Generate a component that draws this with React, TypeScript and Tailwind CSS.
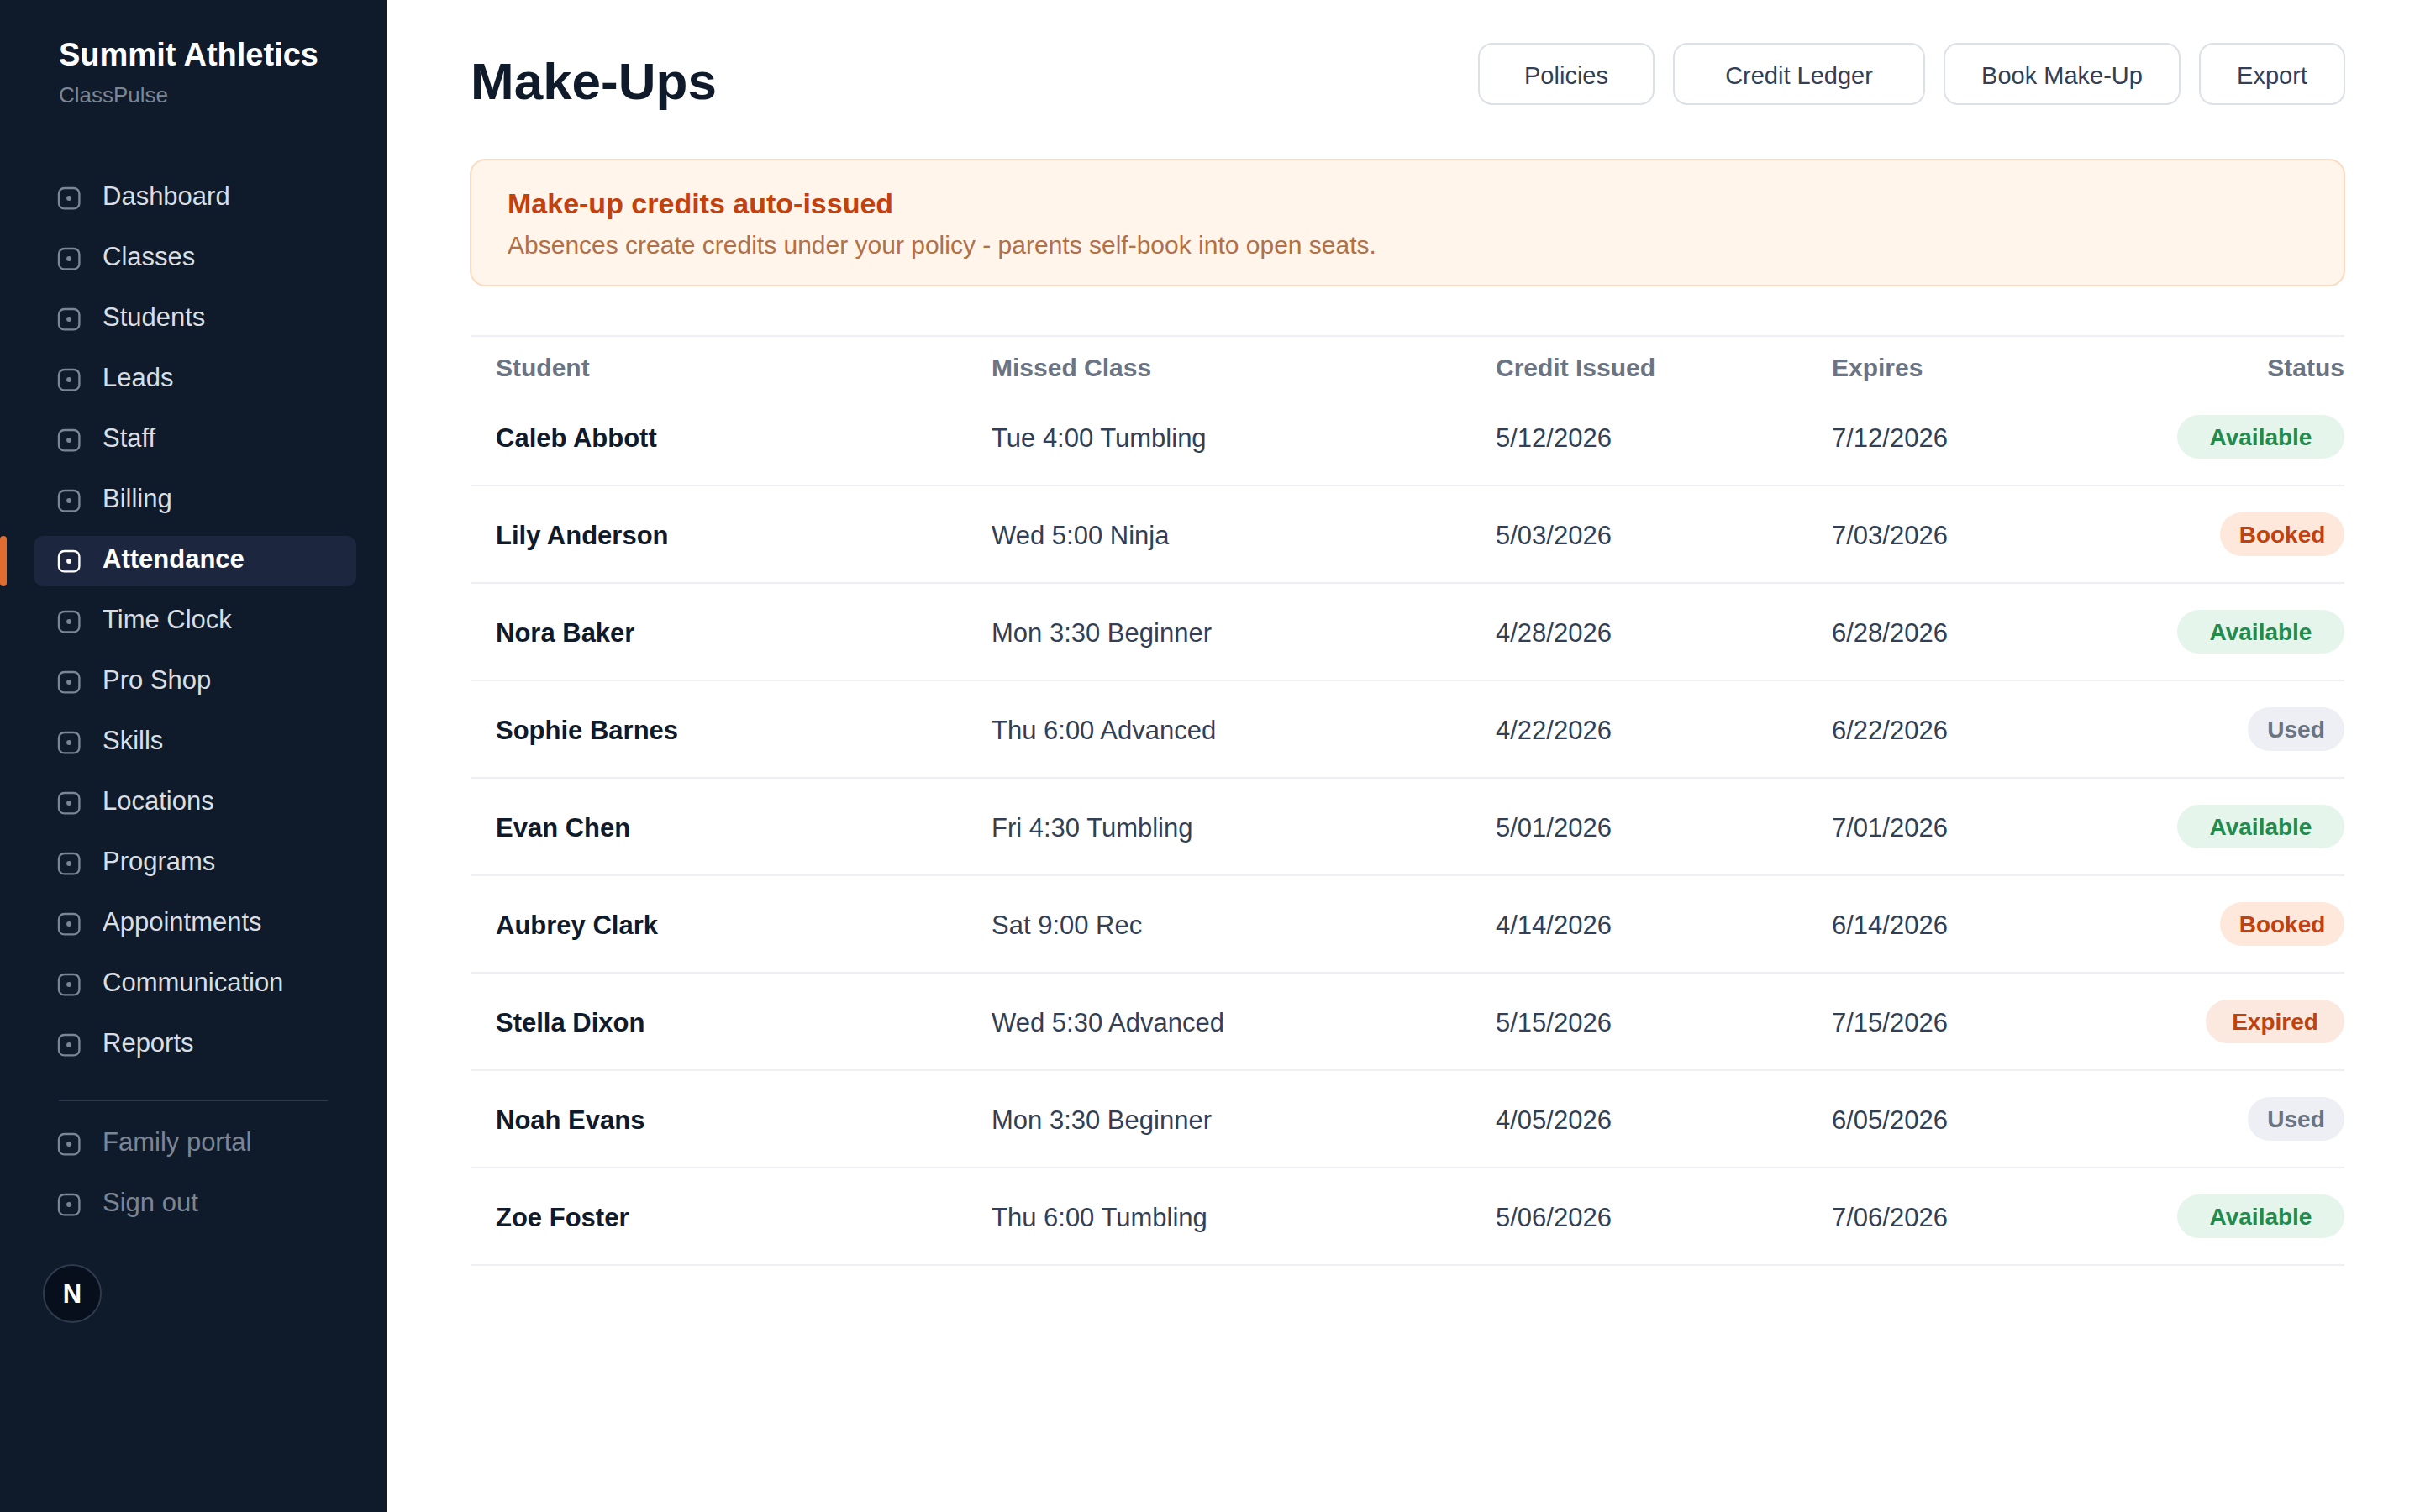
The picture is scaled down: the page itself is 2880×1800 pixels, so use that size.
import { clsx } from "clsx";

interface NavItem {
  label: string;
  active?: boolean;
}

type Status = "Available" | "Booked" | "Used" | "Expired";

interface MakeUp {
  student: string;
  missed: string;
  issued: string;
  expires: string;
  status: Status;
}

const NAV_ITEMS: NavItem[] = [
  { label: "Dashboard" },
  { label: "Classes" },
  { label: "Students" },
  { label: "Leads" },
  { label: "Staff" },
  { label: "Billing" },
  { label: "Attendance", active: true },
  { label: "Time Clock" },
  { label: "Pro Shop" },
  { label: "Skills" },
  { label: "Locations" },
  { label: "Programs" },
  { label: "Appointments" },
  { label: "Communication" },
  { label: "Reports" },
];

const FOOTER_ITEMS: NavItem[] = [{ label: "Family portal" }, { label: "Sign out" }];

const ACTIONS = [
  { label: "Policies", width: "w-[210px]" },
  { label: "Credit Ledger", width: "w-[300px]" },
  { label: "Book Make-Up", width: "w-[282px]" },
  { label: "Export", width: "w-[174px]" },
];

const MAKE_UPS: MakeUp[] = [
  { student: "Caleb Abbott", missed: "Tue 4:00 Tumbling", issued: "5/12/2026", expires: "7/12/2026", status: "Available" },
  { student: "Lily Anderson", missed: "Wed 5:00 Ninja", issued: "5/03/2026", expires: "7/03/2026", status: "Booked" },
  { student: "Nora Baker", missed: "Mon 3:30 Beginner", issued: "4/28/2026", expires: "6/28/2026", status: "Available" },
  { student: "Sophie Barnes", missed: "Thu 6:00 Advanced", issued: "4/22/2026", expires: "6/22/2026", status: "Used" },
  { student: "Evan Chen", missed: "Fri 4:30 Tumbling", issued: "5/01/2026", expires: "7/01/2026", status: "Available" },
  { student: "Aubrey Clark", missed: "Sat 9:00 Rec", issued: "4/14/2026", expires: "6/14/2026", status: "Booked" },
  { student: "Stella Dixon", missed: "Wed 5:30 Advanced", issued: "5/15/2026", expires: "7/15/2026", status: "Expired" },
  { student: "Noah Evans", missed: "Mon 3:30 Beginner", issued: "4/05/2026", expires: "6/05/2026", status: "Used" },
  { student: "Zoe Foster", missed: "Thu 6:00 Tumbling", issued: "5/06/2026", expires: "7/06/2026", status: "Available" },
];

const STATUS_STYLES: Record<Status, string> = {
  Available: "w-[199px] bg-[#e6f5ec] text-[#208b4c]",
  Booked: "w-[148px] bg-[#fde8db] text-[#c2410c]",
  Used: "w-[115px] bg-[#eeeff4] text-[#6b7483]",
  Expired: "w-[165px] bg-[#fbe9df] text-[#c2410c]",
};

const GRID = "grid grid-cols-[590px_600px_400px_1fr] pl-[30px]";

function NavIcon() {
  return (
    <svg viewBox="0 0 28 28" className="size-7 shrink-0" fill="none">
      <rect x="2" y="2" width="24.4" height="24.4" rx="6.5" stroke="currentColor" strokeWidth="2.4" />
      <circle cx="14.1" cy="14.1" r="3" fill="currentColor" />
    </svg>
  );
}

function NavRow({ item, muted }: { item: NavItem; muted?: boolean }) {
  return (
    <div className="relative">
      {item.active && <div className="absolute inset-y-0 left-0 w-2 rounded bg-[#e06c2f]" />}
      <a
        className={clsx(
          "ml-10 mr-9 flex h-[60px] items-center gap-[26px] rounded-xl pl-7 text-[31px]",
          item.active ? "bg-[#1c273f] font-bold text-white" : "text-[#7b8594]"
        )}
      >
        <NavIcon />
        <span
          className={clsx(
            "mt-2.5 self-start whitespace-nowrap leading-[35px]",
            !item.active && !muted && "text-[#d9dee5]"
          )}
        >
          {item.label}
        </span>
      </a>
    </div>
  );
}

function Sidebar() {
  return (
    <aside className="flex w-[460px] shrink-0 flex-col bg-[#0f1a2b] pt-11">
      <div className="px-[70px]">
        <div className="whitespace-nowrap text-[38px] font-bold leading-[42px] text-white">Summit Athletics</div>
        <div className="mt-3 text-[26px] leading-[30px] text-[#7b8594]">ClassPulse</div>
      </div>

      <nav className="mt-[78px] flex flex-col gap-3">
        {NAV_ITEMS.map(item => (
          <NavRow key={item.label} item={item} />
        ))}
      </nav>

      <div className="ml-[70px] mt-[35px] h-0.5 w-80 bg-[#2c3749]" />

      <nav className="mt-[21px] flex flex-col gap-3">
        {FOOTER_ITEMS.map(item => (
          <NavRow key={item.label} item={item} muted />
        ))}
      </nav>

      <div className="ml-[51px] mt-[41px] flex size-[70px] items-center justify-center rounded-full border-2 border-[#2f3a4d] bg-[#080f1c] pt-0.5 text-[31px] font-bold leading-9 text-white">
        N
      </div>
    </aside>
  );
}

export default function App() {
  return (
    <div className="flex h-[1800px] w-[2880px] overflow-hidden bg-white font-['Liberation_Sans',Arial,sans-serif]">
      <Sidebar />

      <main className="flex flex-1 flex-col pl-[99px] pr-[89px] pt-[51px]">
        {/* Title and actions */}
        <header className="flex h-[74px] items-start justify-between">
          <h1 className="mt-[11px] pl-px text-[62px] font-bold leading-[69px] text-[#0f1a2b]">Make-Ups</h1>
          <div className="flex gap-[22px]">
            {ACTIONS.map(action => (
              <button
                key={action.label}
                className={clsx(
                  "h-[74px] whitespace-nowrap rounded-[17px] border-2 border-[#dce0e7] pt-1 text-[29px] leading-8 text-[#333f54]",
                  action.width
                )}
              >
                {action.label}
              </button>
            ))}
          </div>
        </header>

        {/* Policy notice */}
        <section className="mt-16 h-[152px] rounded-[19px] border-2 border-[#fbdcc0] bg-[#fff5eb] px-[43px] pt-8">
          <h2 className="text-[34px] font-bold leading-[38px] text-[#c2410c]">Make-up credits auto-issued</h2>
          <p className="mt-[14px] text-[30px] leading-[33px] text-[#b07048]">
            Absences create credits under your policy - parents self-book into open seats.
          </p>
        </section>

        {/* Credits table */}
        <section className="mx-px mt-[58px] border-t-2 border-[#eeeff4]">
          <div className={clsx(GRID, "h-[62px] pt-5 text-[30px] font-bold leading-[33px] text-[#6b7483]")}>
            <div>Student</div>
            <div>Missed Class</div>
            <div>Credit Issued</div>
            <div className="flex justify-between">
              <span>Expires</span>
              <span>Status</span>
            </div>
          </div>
          {MAKE_UPS.map(row => (
            <div
              key={row.student}
              className={clsx(
                GRID,
                "h-[116px] border-b-2 border-[#eeeff4] pt-[41px] text-[31px] leading-[35px] text-[#333f54]"
              )}
            >
              <div className="font-bold text-[#0f1a2b]">{row.student}</div>
              <div>{row.missed}</div>
              <div>{row.issued}</div>
              <div className="flex items-start justify-between">
                <span>{row.expires}</span>
                <span
                  className={clsx(
                    "-mt-[10px] flex h-[52px] items-center justify-center rounded-full pt-px text-[28px] font-bold leading-[31px]",
                    STATUS_STYLES[row.status]
                  )}
                >
                  {row.status}
                </span>
              </div>
            </div>
          ))}
        </section>
      </main>
    </div>
  );
}
